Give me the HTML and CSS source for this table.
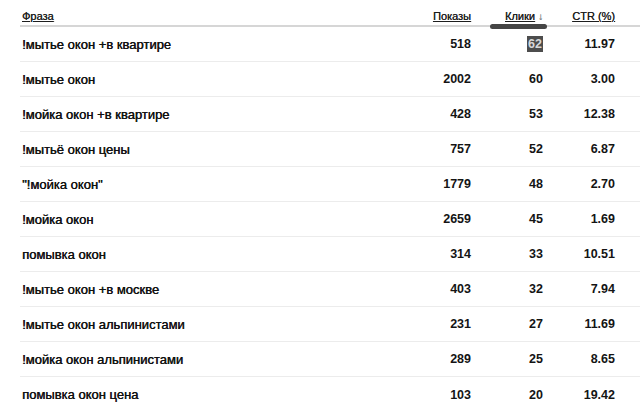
FILE: index.html
```html
<!DOCTYPE html>
<html lang="ru">
<head>
<meta charset="utf-8">
<title>Фразы</title>
<link rel="stylesheet" href="styles.css">
</head>
<body>
<div class="table">
  <div class="row head">
    <div class="cell phrase"><a class="sort">Фраза</a></div>
    <div class="cell num"><a class="sort">Показы</a></div>
    <div class="cell num active"><a class="sort">Клики</a> <span class="arrow">↓</span></div>
    <div class="cell num"><a class="sort">CTR (%)</a></div>
  </div>
  <div class="row"><div class="cell phrase">!мытье окон +в квартире</div><div class="cell num">518</div><div class="cell num"><span class="sel">62</span></div><div class="cell num">11.97</div></div>
  <div class="row"><div class="cell phrase">!мытье окон</div><div class="cell num">2002</div><div class="cell num">60</div><div class="cell num">3.00</div></div>
  <div class="row"><div class="cell phrase">!мойка окон +в квартире</div><div class="cell num">428</div><div class="cell num">53</div><div class="cell num">12.38</div></div>
  <div class="row"><div class="cell phrase">!мытьё окон цены</div><div class="cell num">757</div><div class="cell num">52</div><div class="cell num">6.87</div></div>
  <div class="row"><div class="cell phrase">"!мойка окон"</div><div class="cell num">1779</div><div class="cell num">48</div><div class="cell num">2.70</div></div>
  <div class="row"><div class="cell phrase">!мойка окон</div><div class="cell num">2659</div><div class="cell num">45</div><div class="cell num">1.69</div></div>
  <div class="row"><div class="cell phrase">помывка окон</div><div class="cell num">314</div><div class="cell num">33</div><div class="cell num">10.51</div></div>
  <div class="row"><div class="cell phrase">!мытье окон +в москве</div><div class="cell num">403</div><div class="cell num">32</div><div class="cell num">7.94</div></div>
  <div class="row"><div class="cell phrase">!мытье окон альпинистами</div><div class="cell num">231</div><div class="cell num">27</div><div class="cell num">11.69</div></div>
  <div class="row"><div class="cell phrase">!мойка окон альпинистами</div><div class="cell num">289</div><div class="cell num">25</div><div class="cell num">8.65</div></div>
  <div class="row last"><div class="cell phrase">помывка окон цена</div><div class="cell num">103</div><div class="cell num">20</div><div class="cell num">19.42</div></div>
</div>
</body>
</html>
```
FILE: styles.css
```css
html, body {
  margin: 0;
  padding: 0;
  background: #fff;
}
* {
  box-sizing: border-box;
}
body {
  font-family: "Liberation Sans", Arial, sans-serif;
  color: #141414;
  width: 640px;
  height: 420px;
  overflow: hidden;
}
.table {
  margin-left: 20px;
}
.row {
  display: grid;
  grid-template-columns: 1fr 80px 72px 72px;
  align-items: center;
  height: 35px;
  border-bottom: 1px solid #ececec;
  padding-right: 25px;
  font-size: 12.5px;
}
.row.last {
  border-bottom: none;
}
.cell.phrase {
  padding-left: 2px;
  font-size: 13px;
  font-weight: normal;
  color: #111;
  text-shadow: 0.4px 0 0 #111;
}
.cell.num {
  text-align: right;
  font-weight: bold;
}
.row.head {
  height: 27px;
  border-bottom: 2px solid #d6d6d6;
  font-size: 11px;
  align-items: stretch;
}
.row.head .cell {
  padding-top: 10px;
  line-height: 12px;
  font-size: 11px;
  font-weight: normal;
  text-shadow: 0.2px 0 0 #333;
}
.sort {
  color: #1e1e1e;
  text-decoration: underline;
}
.arrow {
  color: #9a9a9a;
  font-size: 10px;
}
.active {
  position: relative;
}
.active::after {
  content: "";
  position: absolute;
  left: 19px;
  right: -4px;
  bottom: -4px;
  height: 5px;
  border-radius: 3px;
  background: #454545;
}
.sel {
  background: #4d4d4d;
  color: #d8d8d8;
  padding: 1px 1px;
}
```
